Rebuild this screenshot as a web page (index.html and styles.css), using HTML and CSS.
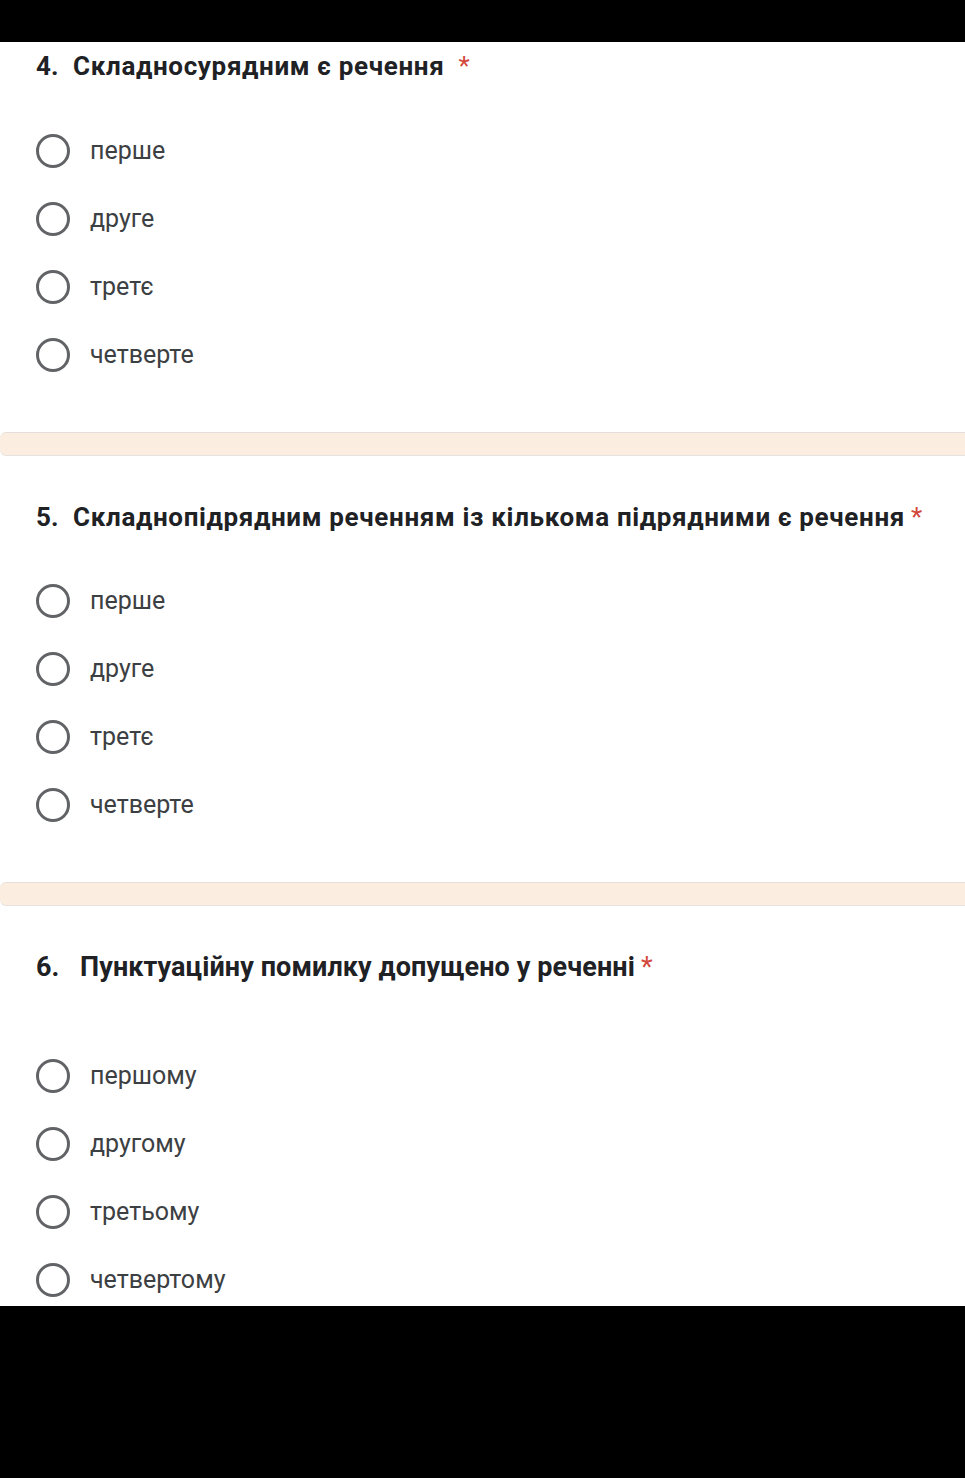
FILE: index.html
```html
<!DOCTYPE html>
<html lang="uk">
<head>
<meta charset="utf-8">
<title>Форма</title>
<link rel="stylesheet" href="styles.css">
</head>
<body>
<div class="topbar"></div>
<main class="sheet">
  <section class="card card-first">
    <h2 class="qtitle"><span class="num">4.</span>Складносурядним є речення<span class="req req-wide">*</span></h2>
    <ul class="options">
      <li class="opt"><span class="radio"></span><span class="label">перше</span></li>
      <li class="opt"><span class="radio"></span><span class="label">друге</span></li>
      <li class="opt"><span class="radio"></span><span class="label">третє</span></li>
      <li class="opt"><span class="radio"></span><span class="label">четверте</span></li>
    </ul>
  </section>
  <div class="sep"></div>
  <section class="card card-mid">
    <h2 class="qtitle"><span class="num">5.</span>Складнопідрядним реченням із кількома підрядними є речення<span class="req">*</span></h2>
    <ul class="options">
      <li class="opt"><span class="radio"></span><span class="label">перше</span></li>
      <li class="opt"><span class="radio"></span><span class="label">друге</span></li>
      <li class="opt"><span class="radio"></span><span class="label">третє</span></li>
      <li class="opt"><span class="radio"></span><span class="label">четверте</span></li>
    </ul>
  </section>
  <div class="sep"></div>
  <section class="card card-last">
    <h2 class="qtitle qtitle-tall"><span class="num num-wide">6.</span>Пунктуаційну помилку допущено у реченні<span class="req">*</span></h2>
    <ul class="options options-far">
      <li class="opt"><span class="radio"></span><span class="label">першому</span></li>
      <li class="opt"><span class="radio"></span><span class="label">другому</span></li>
      <li class="opt"><span class="radio"></span><span class="label">третьому</span></li>
      <li class="opt"><span class="radio"></span><span class="label">четвертому</span></li>
    </ul>
  </section>
</main>
<div class="bottombar"></div>
</body>
</html>
```

FILE: styles.css
```css
* { box-sizing: border-box; }
html, body { margin: 0; padding: 0; background: #000; }
body { font-family: Roboto, "Noto Sans", "Liberation Sans", sans-serif; width: 965px; height: 1478px; overflow: hidden; }

.topbar { height: 42px; background: #000; }
.bottombar { height: 172px; background: #000; }

.sheet {
  height: 1264px;
  background: #fff;
  overflow: hidden;
  display: flex;
  flex-direction: column;
}

.card { background: #fff; padding-left: 36px; flex: none; }
.card-first { height: 390px; padding-top: 8px; }
.card-mid { height: 426px; padding-top: 45px; }
.card-last { height: 440px; padding-top: 45px; }

.sep {
  height: 24px;
  flex: none;
  background: #fcede1;
  border-top: 1px solid #e4dfdb;
  border-bottom: 1px solid #e6e2df;
  border-radius: 6px 0 0 6px;
}

.qtitle {
  margin: 0;
  font-size: 26px;
  letter-spacing: 0.67px;
  line-height: 32px;
  font-weight: 700;
  color: #202124;
  white-space: nowrap;
}
.qtitle-tall { font-size: 27px; letter-spacing: 0.1px; }
.num { display: inline-block; width: 37px; letter-spacing: 0; }
.num-wide { width: 44px; }
.req { color: #d2483a; margin-left: 6px; font-weight: 400; letter-spacing: 0; }
.req-wide { margin-left: 14px; }

.options { list-style: none; margin: 35px 0 0; padding: 0; }
.card-mid .options { margin-top: 34px; }
.card-last .options-far { margin-top: 59px; }

.opt {
  height: 68px;
  display: flex;
  align-items: center;
  gap: 20px;
}
.radio {
  width: 34px;
  height: 34px;
  flex: none;
  border: 3px solid #616366;
  border-radius: 50%;
}
.label {
  font-size: 25px;
  color: #3c4043;
  line-height: 32px;
}
```
